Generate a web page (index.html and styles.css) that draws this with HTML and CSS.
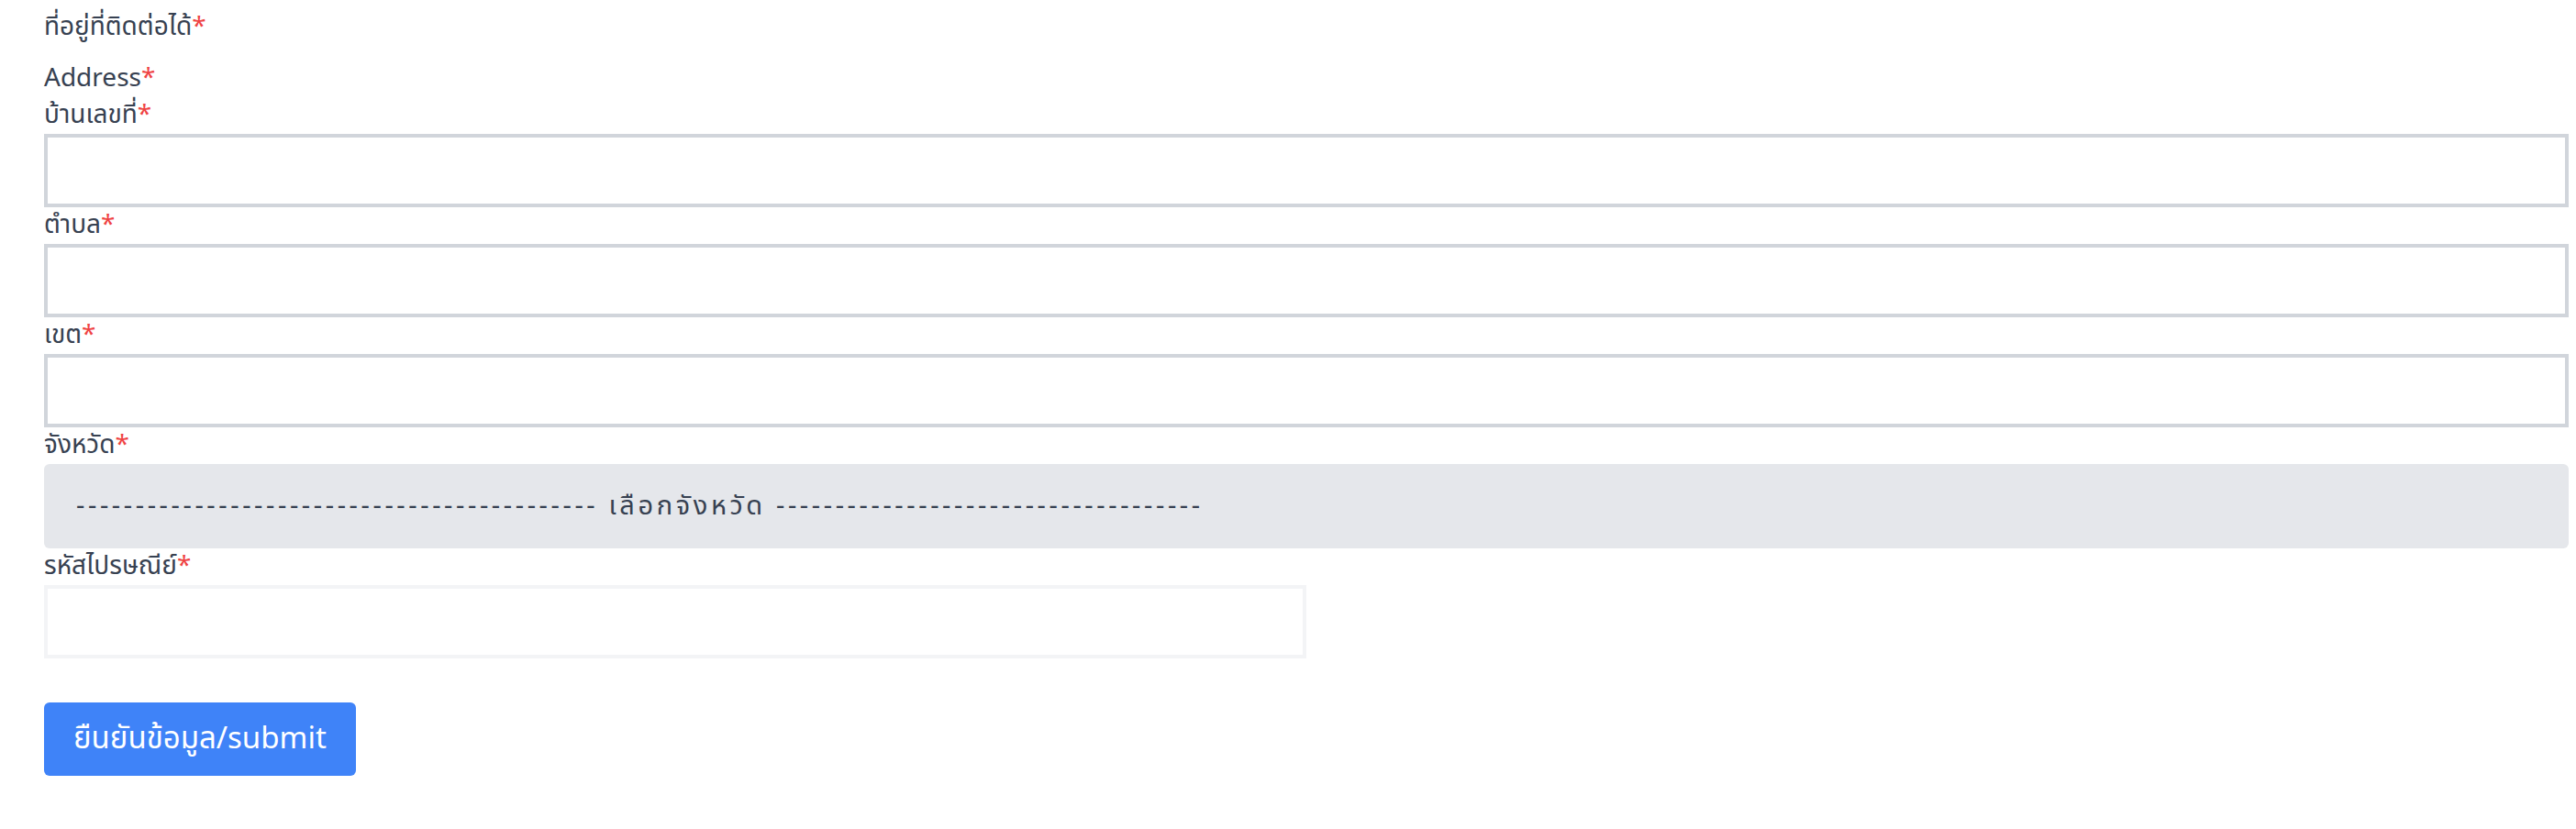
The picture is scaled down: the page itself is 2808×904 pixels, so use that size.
FILE: index.html
```html
<!DOCTYPE html>
<html lang="th">
<head>
<meta charset="utf-8">
<title>ที่อยู่ที่ติดต่อได้</title>
<link rel="stylesheet" href="styles.css">
</head>
<body>
<form class="form">
  <p class="heading">ที่อยู่ที่ติดต่อได้<span class="req">*</span></p>
  <div class="group">
    <p class="label">Address<span class="req">*</span></p>
    <label class="label" for="house">บ้านเลขที่<span class="req">*</span></label>
    <input class="input" id="house" type="text">
    <label class="label" for="subdistrict">ตำบล<span class="req">*</span></label>
    <input class="input" id="subdistrict" type="text">
    <label class="label" for="district">เขต<span class="req">*</span></label>
    <input class="input" id="district" type="text">
    <label class="label" for="province">จังหวัด<span class="req">*</span></label>
    <select class="select" id="province">
      <option>-------------------------------------------- เลือกจังหวัด ------------------------------------</option>
    </select>
    <label class="label" for="zip">รหัสไปรษณีย์<span class="req">*</span></label>
    <input class="input input-half" id="zip" type="text">
  </div>
  <button class="btn" type="button">ยืนยันข้อมูล/submit</button>
</form>
</body>
</html>
```
FILE: styles.css
```css
* { box-sizing: border-box; }
html, body { margin: 0; padding: 0; background: #ffffff; }
body {
  font-family: "Noto Sans Thai", "Noto Sans", "Liberation Sans", sans-serif;
  color: #374151;
}
.form {
  display: flex;
  flex-direction: column;
  align-items: flex-start;
  padding: 10px 8px 0 48px;
}
.heading {
  margin: 0 0 16px;
  font-size: 28px;
  line-height: 40px;
}
.group {
  display: flex;
  flex-direction: column;
  align-self: stretch;
}
.label {
  display: block;
  margin: 0;
  font-size: 28px;
  line-height: 40px;
}
.req { color: #ef4444; }
.input {
  display: block;
  width: 100%;
  height: 80px;
  margin: 0;
  border: 4px solid #d1d5db;
  background: #ffffff;
  font: inherit;
  font-size: 28px;
  padding: 0 16px;
  outline: none;
}
.input-half {
  width: 50%;
  border-color: #f3f4f6;
}
.select {
  display: block;
  width: 100%;
  height: 92px;
  margin: 0;
  border: 0;
  border-radius: 6px;
  background: #e5e7eb;
  color: #374151;
  font: inherit;
  font-size: 29px;
  letter-spacing: 3.6px;
  padding: 0 0 0 35px;
  -webkit-appearance: none;
  appearance: none;
  outline: none;
}
.btn {
  margin-top: 48px;
  height: 80px;
  padding: 0 32px;
  border: 0;
  border-radius: 6px;
  background: #3f83f8;
  color: #ffffff;
  font: inherit;
  font-size: 33px;
  cursor: pointer;
}
```
